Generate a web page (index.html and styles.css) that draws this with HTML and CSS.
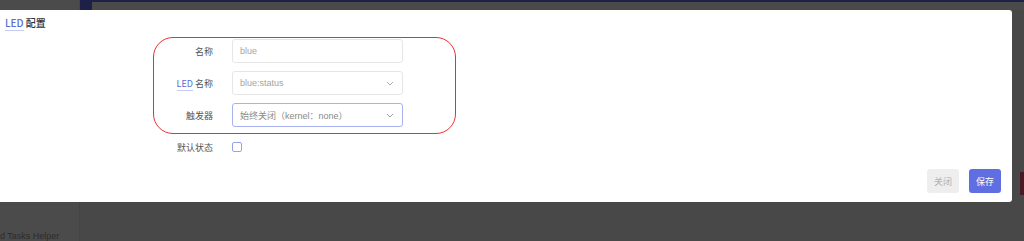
FILE: index.html
```html
<!DOCTYPE html>
<html lang="zh">
<head>
<meta charset="utf-8">
<link rel="stylesheet" href="styles.css">
</head>
<body>
<div class="page">
  <aside class="sidebar">
    <div class="side-item">d Tasks Helper</div>
  </aside>
  <main class="main">
    <div class="topline"><span class="navy-block"></span><span class="gray-rest"></span></div>
    <div class="red-tag"></div>
  </main>
</div>

<div class="modal">
  <h3 class="modal-title"><abbr class="led">LED</abbr> 配置</h3>
  <div class="form">
    <div class="highlight"></div>
    <div class="row">
      <label class="label">名称</label>
      <div class="input"><span class="ph">blue</span></div>
    </div>
    <div class="row">
      <label class="label"><abbr class="led">LED</abbr> 名称</label>
      <div class="input select"><span class="ph">blue:status</span>
        <svg class="chev" width="8" height="5" viewBox="0 0 8 5"><path d="M1 1 L4 4 L7 1" fill="none" stroke="#aab" stroke-width="1"/></svg>
      </div>
    </div>
    <div class="row">
      <label class="label">触发器</label>
      <div class="input select focus"><span class="ph dark">始终关闭（kernel：none）</span>
        <svg class="chev" width="8" height="5" viewBox="0 0 8 5"><path d="M1 1 L4 4 L7 1" fill="none" stroke="#99a" stroke-width="1"/></svg>
      </div>
    </div>
    <div class="row">
      <label class="label">默认状态</label>
      <div class="check-wrap"><span class="checkbox"></span></div>
    </div>
  </div>
  <div class="actions">
    <button class="btn btn-close">关闭</button>
    <button class="btn btn-save">保存</button>
  </div>
</div>
</body>
</html>
```

FILE: styles.css
```css
* { box-sizing: border-box; }
html, body {
  margin: 0;
  padding: 0;
  width: 1024px;
  height: 241px;
  overflow: hidden;
  background: #494949;
  font-family: "Noto Sans CJK SC", "Noto Sans", sans-serif;
}
.page {
  display: flex;
  width: 1024px;
  height: 241px;
}
.sidebar {
  width: 80px;
  background: #4b4b4b;
  border-right: 1px solid #444;
  display: flex;
  flex-direction: column;
  justify-content: flex-end;
  overflow: hidden;
}
.side-item {
  color: #2c2c2c;
  font-size: 9px;
  line-height: 10px;
  margin-left: 0;
  margin-bottom: 0;
  white-space: nowrap;
  font-family: "Liberation Sans", sans-serif;
}
.main {
  flex: 1;
  position: relative;
  background: #484848;
}
.topline {
  display: flex;
  height: 10px;
}
.navy-block {
  width: 12px;
  background: #1d2148;
}
.gray-rest {
  flex: 1;
  background: #4a4a4a;
  border-top: 2px solid #1d2148;
}
.red-tag {
  position: absolute;
  right: 0;
  top: 172px;
  width: 4px;
  height: 23px;
  background: #4a1a24;
}
.modal {
  position: absolute;
  left: 0;
  top: 10px;
  width: 1012px;
  height: 192px;
  background: #fff;
  border-radius: 0 3px 3px 0;
  padding: 7px 0 0 5px;
}
.modal-title {
  margin: 0;
  font-size: 10px;
  line-height: 12px;
  font-weight: 500;
  color: #333;
}
abbr.led {
  color: #5a6bd8;
  text-decoration: none;
  border-bottom: 1px solid #c5cbf2;
}
.form {
  position: relative;
  margin-top: 10px;
  display: flex;
  flex-direction: column;
  gap: 8px;
}
.highlight {
  position: absolute;
  left: 148px;
  top: -2px;
  width: 303px;
  height: 97px;
  border: 1px solid #e8302f;
  border-radius: 20px;
  pointer-events: none;
}
.row {
  display: flex;
  align-items: center;
  height: 24px;
}
.label {
  width: 208px;
  text-align: right;
  font-size: 9px;
  color: #555;
}
.input {
  margin-left: 19px;
  width: 171px;
  height: 24px;
  border: 1px solid #e6e6e6;
  border-radius: 3px;
  display: flex;
  align-items: center;
  justify-content: space-between;
  padding: 0 8px 0 7px;
}
.input.focus {
  border-color: #a9b0ef;
}
.ph {
  font-size: 9px;
  color: #a3a3a3;
  font-family: "Liberation Sans", "Noto Sans CJK SC", sans-serif;
}
.ph.dark { color: #8a8a8a; }
.chev { display: block; }
.check-wrap {
  margin-left: 19px;
  height: 24px;
  display: flex;
  align-items: center;
}
.checkbox {
  width: 10px;
  height: 10px;
  border: 1px solid #9aa2e6;
  border-radius: 2px;
  display: block;
}
.actions {
  display: flex;
  justify-content: flex-end;
  gap: 10px;
  margin-top: 10px;
  padding-right: 11px;
}
.btn {
  height: 24px;
  width: 32px;
  border: none;
  border-radius: 3px;
  font-size: 9px;
  font-family: "Noto Sans CJK SC", sans-serif;
  padding: 0;
}
.btn-close {
  background: #eeeeee;
  color: #b0b0b0;
}
.btn-save {
  background: #5f6fe1;
  color: #fff;
}
```
